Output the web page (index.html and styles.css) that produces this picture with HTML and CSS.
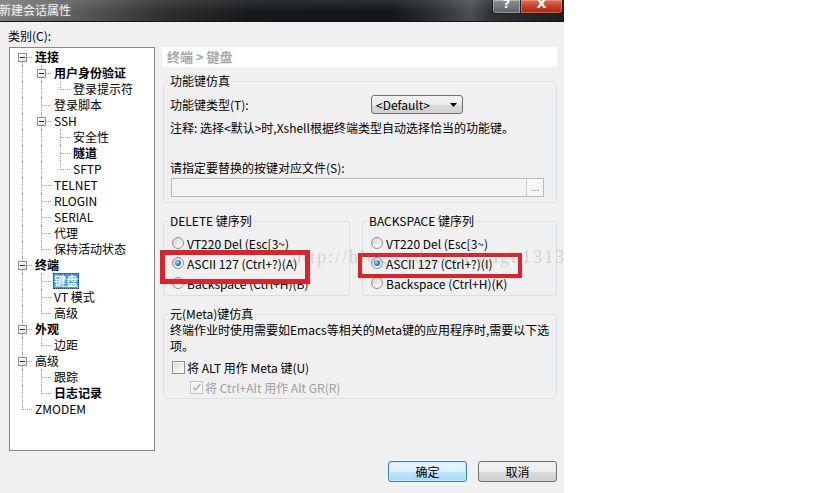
FILE: index.html
```html
<!DOCTYPE html>
<html lang="zh-CN">
<head>
<meta charset="utf-8">
<title>新建会话属性</title>
<link rel="stylesheet" href="styles.css">
</head>
<body>
<div class="page">
  <div class="window">
    <div class="titlebar">
      <span class="title">新建会话属性</span>
      <div class="caption-btns">
        <span class="cbtn help"><span>?</span></span>
        <span class="cbtn close"><span>X</span></span>
      </div>
    </div>
    <div class="client">
      <div class="cat-label">类别(C):</div>
      <div class="main">
        <div class="tree">
          <div class="row"><span class="g f"><span class="box"></span></span><span class="lbl b">连接</span></div>
          <div class="row"><span class="g v"></span><span class="g t"><span class="box"></span></span><span class="lbl b">用户身份验证</span></div>
          <div class="row"><span class="g v"></span><span class="g v"></span><span class="g l"></span><span class="lbl">登录提示符</span></div>
          <div class="row"><span class="g v"></span><span class="g t"></span><span class="lbl">登录脚本</span></div>
          <div class="row"><span class="g v"></span><span class="g t"><span class="box"></span></span><span class="lbl">SSH</span></div>
          <div class="row"><span class="g v"></span><span class="g v"></span><span class="g t"></span><span class="lbl">安全性</span></div>
          <div class="row"><span class="g v"></span><span class="g v"></span><span class="g t"></span><span class="lbl b">隧道</span></div>
          <div class="row"><span class="g v"></span><span class="g v"></span><span class="g l"></span><span class="lbl">SFTP</span></div>
          <div class="row"><span class="g v"></span><span class="g t"></span><span class="lbl">TELNET</span></div>
          <div class="row"><span class="g v"></span><span class="g t"></span><span class="lbl">RLOGIN</span></div>
          <div class="row"><span class="g v"></span><span class="g t"></span><span class="lbl">SERIAL</span></div>
          <div class="row"><span class="g v"></span><span class="g t"></span><span class="lbl">代理</span></div>
          <div class="row"><span class="g v"></span><span class="g l"></span><span class="lbl">保持活动状态</span></div>
          <div class="row"><span class="g t"><span class="box"></span></span><span class="lbl b">终端</span></div>
          <div class="row"><span class="g v"></span><span class="g t"></span><span class="lbl b sel">键盘</span></div>
          <div class="row"><span class="g v"></span><span class="g t"></span><span class="lbl">VT 模式</span></div>
          <div class="row"><span class="g v"></span><span class="g l"></span><span class="lbl">高级</span></div>
          <div class="row"><span class="g t"><span class="box"></span></span><span class="lbl b">外观</span></div>
          <div class="row"><span class="g v"></span><span class="g l"></span><span class="lbl">边距</span></div>
          <div class="row"><span class="g t"><span class="box"></span></span><span class="lbl">高级</span></div>
          <div class="row"><span class="g v"></span><span class="g t"></span><span class="lbl">跟踪</span></div>
          <div class="row"><span class="g v"></span><span class="g l"></span><span class="lbl b">日志记录</span></div>
          <div class="row"><span class="g l"></span><span class="lbl">ZMODEM</span></div>
        </div>
        <div class="panel">
          <div class="crumb">终端 &gt; 键盘</div>
          <fieldset class="group g-func">
            <legend>功能键仿真</legend>
            <div class="func-row">
              <span class="func-label">功能键类型(T):</span>
              <span class="select"><span>&lt;Default&gt;</span><svg width="7" height="4" viewBox="0 0 7 4"><path d="M0 0H7L3.5 4Z" fill="#000"/></svg></span>
            </div>
            <div class="note">注释: 选择&lt;默认&gt;时,Xshell根据终端类型自动选择恰当的功能键。</div>
            <div class="file-label">请指定要替换的按键对应文件(S):</div>
            <div class="file-input"><span class="browse">...</span></div>
          </fieldset>
          <div class="seq-row">
            <fieldset class="group seq del">
              <legend>DELETE 键序列</legend>
              <div class="opts">
                <div class="opt"><span class="radio"></span>VT220 Del (Esc[3~)</div>
                <div class="opt"><span class="radio on"></span>ASCII 127 (Ctrl+?)(A)</div>
                <div class="opt"><span class="radio"></span>Backspace (Ctrl+H)(B)</div>
              </div>
            </fieldset>
            <fieldset class="group seq bs">
              <legend>BACKSPACE 键序列</legend>
              <div class="opts">
                <div class="opt"><span class="radio"></span>VT220 Del (Esc[3~)</div>
                <div class="opt"><span class="radio on"></span>ASCII 127 (Ctrl+?)(I)</div>
                <div class="opt"><span class="radio"></span>Backspace (Ctrl+H)(K)</div>
              </div>
            </fieldset>
          </div>
          <fieldset class="group meta">
            <legend>元(Meta)键仿真</legend>
            <div class="meta-text">终端作业时使用需要如Emacs等相关的Meta键的应用程序时,需要以下选<br>项。</div>
            <div class="checks">
              <div class="chk"><span class="cb"></span>将 ALT 用作 Meta 键(U)</div>
              <div class="chk sub"><span class="cb dis"><svg width="11" height="11" viewBox="0 0 11 11"><path d="M2 5.5L4.5 8L9.5 2" fill="none" stroke="#b4b4b4" stroke-width="1.6"/></svg></span>将 Ctrl+Alt 用作 Alt GR(R)</div>
            </div>
          </fieldset>
          <div class="footer">
            <button class="btn default">确定</button>
            <button class="btn">取消</button>
          </div>
        </div>
      </div>
    </div>
  </div>
  <div class="mark mark-left"></div>
  <div class="mark mark-right"></div>
  <div class="watermark">http://blog.csdn.net/gugu1313</div>
</div>
</body>
</html>
```

FILE: styles.css
```css
* { box-sizing: border-box; }
html, body { margin: 0; padding: 0; }
body {
  width: 819px;
  height: 493px;
  overflow: hidden;
  background: #fff;
  font-family: "Noto Sans CJK SC", "Noto Sans", sans-serif;
  font-size: 12px;
  color: #000;
}
.page { position: relative; width: 819px; height: 493px; }

.window {
  width: 564px;
  height: 493px;
  background: #f0f0f0;
  display: flex;
  flex-direction: column;
}

/* title bar */
.titlebar {
  flex: none;
  height: 22px;
  display: flex;
  align-items: flex-start;
  border-bottom: 1px solid #151515;
  background:
    linear-gradient(to bottom, rgba(255,255,255,0.10), rgba(255,255,255,0) 60%),
    linear-gradient(to right, #7a7a7a 0px, #5e5e5e 70px, #2c2c2c 170px, #16191c 250px, #13161a 390px, #2b2f34 435px, #4b4e52 470px, #2e3134 492px, #1c1e20 564px);
}
.title {
  margin-left: -1px;
  line-height: 20px;
  font-size: 12px;
  color: #f2f2f2;
  text-shadow: 0 0 5px rgba(255,255,255,0.35);
}
.caption-btns { margin-left: auto; margin-right: 1px; display: flex; }
.cbtn {
  height: 14px;
  display: flex;
  justify-content: center;
  align-items: flex-end;
  overflow: hidden;
  color: #fff;
  font-weight: bold;
  border: 1px solid #1e1e1e;
  border-top: 0;
}
.cbtn span { font-size: 13px; line-height: 12px; margin-bottom: 3px; font-family: "DejaVu Sans", sans-serif; }
.help {
  width: 29px;
  border-radius: 0 0 0 4px;
  background: linear-gradient(#8d8f92, #5d6064);
  box-shadow: inset 0 0 0 1px rgba(255,255,255,0.35);
}
.close {
  width: 42px;
  border-left: 0;
  border-radius: 0 0 4px 0;
  background: linear-gradient(#d9735f, #c23b24 55%, #a92813);
  box-shadow: inset 0 0 0 1px rgba(255,200,190,0.35);
}

/* client area */
.client { flex: 1; padding: 6px 0 0 9px; }
.cat-label { line-height: 16px; margin-left: -1px; }
.main { display: flex; gap: 7px; margin-top: 3px; align-items: flex-start; }

/* tree */
.tree {
  width: 146px;
  height: 404px;
  background: #fff;
  border: 1px solid #828790;
  padding: 1px 0 0 3px;
}
.row { display: flex; height: 16px; align-items: center; }
.g { position: relative; width: 19px; height: 16px; flex: none; }
.g::before, .g::after { content: ""; position: absolute; }
.v::before, .t::before { left: 9px; top: 0; height: 16px; border-left: 1px dotted #a0a0a0; }
.l::before { left: 9px; top: 0; height: 9px; border-left: 1px dotted #a0a0a0; }
.f::before { left: 9px; top: 8px; height: 8px; border-left: 1px dotted #a0a0a0; }
.t::after, .l::after, .f::after { left: 10px; top: 8px; width: 9px; border-top: 1px dotted #a0a0a0; }
.box {
  position: absolute;
  z-index: 1;
  left: 5px;
  top: 4px;
  width: 9px;
  height: 9px;
  border: 1px solid #939393;
  background: linear-gradient(135deg, #ffffff, #dedede);
}
.box::after {
  content: "";
  position: absolute;
  left: 1px;
  top: 3px;
  width: 5px;
  height: 1px;
  background: #2b2b2b;
}
.lbl { margin-left: 2px; padding: 0 1px; line-height: 16px; white-space: nowrap; }
.b { font-weight: bold; }
.sel { background: #3399ff; color: #fff; outline: 1px dotted #3a3a3a; outline-offset: -1px; }

/* right panel */
.panel { width: 395px; display: flex; flex-direction: column; }
.crumb {
  height: 20px;
  background: #fff;
  padding-left: 5px;
  line-height: 20px;
  font-size: 13px;
  font-weight: bold;
  color: #a8a8a8;
}
.group {
  margin: 0 0 0 1px;
  padding: 0 12px 0 6px;
  border: 1px solid #d5dfe5;
  border-radius: 3px;
  min-width: 0;
}
.group legend { padding: 0 2px; margin-left: -2px; line-height: 16px; white-space: nowrap; }

.g-func { margin-top: 6px; padding-bottom: 5px; }
.func-row { display: flex; align-items: center; height: 19px; margin-top: 6px; }
.func-label { width: 201px; }
.select {
  width: 92px;
  height: 19px;
  border: 1px solid #707070;
  border-radius: 3px;
  background: linear-gradient(#f2f2f2, #ebebeb 50%, #dddddd 51%, #cfcfcf);
  display: flex;
  align-items: center;
  justify-content: space-between;
  padding: 0 5px 0 4px;
  line-height: 17px;
}
.note { margin-top: 6px; line-height: 16px; white-space: nowrap; }
.file-label { margin-top: 24px; line-height: 16px; }
.file-input {
  margin: 2px 0 0 1px;
  height: 19px;
  border: 1px solid #b9b9b9;
  background: #f3f3f3;
  display: flex;
  justify-content: flex-end;
}
.browse {
  width: 17px;
  border-left: 1px solid #d0d0d0;
  background: #f7f7f7;
  color: #8a8a8a;
  font-size: 10px;
  line-height: 15px;
  text-align: center;
}

.seq-row { display: flex; gap: 12px; margin: 10px 0 0 1px; }
.seq-row .group { margin-left: 0; }
.del { width: 187px; }
.bs { width: 195px; }
.seq { padding-bottom: 2px; }
.opts { margin-top: 4px; }
.opt { height: 20px; display: flex; align-items: center; white-space: nowrap; }
.radio {
  position: relative;
  flex: none;
  width: 12px;
  height: 12px;
  margin: 0 3px 0 2px;
  border-radius: 50%;
  border: 1px solid #8e8f8f;
  background: linear-gradient(135deg, #d4d4d4, #ffffff);
}
.radio.on::after {
  content: "";
  position: absolute;
  left: 2px;
  top: 2px;
  width: 6px;
  height: 6px;
  border-radius: 50%;
  background: radial-gradient(circle at 35% 35%, #a3dcff, #2b80c8 55%, #0f4a86);
}

.meta { margin-top: 10px; padding-bottom: 1px; }
.meta-text { line-height: 16px; white-space: nowrap; }
.checks { margin-top: 3px; }
.chk { height: 20px; display: flex; align-items: center; white-space: nowrap; }
.chk.sub { padding-left: 18px; color: #a0a0a0; }
.cb {
  flex: none;
  width: 13px;
  height: 13px;
  margin: 0 2px 0 2px;
  border: 1px solid #8e8f8f;
  background: linear-gradient(135deg, #dadada, #ffffff);
  box-shadow: inset 0 0 0 1px #f6f6f6;
  display: flex;
  align-items: center;
  justify-content: center;
}
.cb.dis { border-color: #c4c4c4; background: #f5f5f5; box-shadow: none; }

.footer { display: flex; justify-content: flex-end; gap: 11px; margin-top: 62px; }
.btn {
  width: 79px;
  height: 21px;
  padding: 0;
  border: 1px solid #707070;
  border-radius: 3px;
  background: linear-gradient(#f2f2f2, #ebebeb 50%, #dddddd 51%, #cfcfcf);
  font-family: inherit;
  font-size: 12px;
  line-height: 19px;
  color: #000;
}
.btn.default {
  border-color: #3c7fb1;
  background: linear-gradient(#eaf6fd, #d9f0fc 50%, #bee6fd 51%, #a7d9f5);
  box-shadow: inset 0 0 0 1px #c6e8fb;
}

/* annotations drawn on top of the screenshot */
.mark { position: absolute; border-style: solid; border-color: #d9232d; }
.mark-left { left: 160px; top: 250px; width: 150px; height: 34px; border-width: 5px; }
.mark-right { left: 358px; top: 253px; width: 164px; height: 25px; border-width: 4px; }
.watermark {
  position: absolute;
  left: 292px;
  top: 246px;
  font-family: "Liberation Serif", serif;
  font-size: 18px;
  line-height: 22px;
  letter-spacing: 2px;
  color: rgba(130, 130, 130, 0.28);
  white-space: nowrap;
  pointer-events: none;
}
```
